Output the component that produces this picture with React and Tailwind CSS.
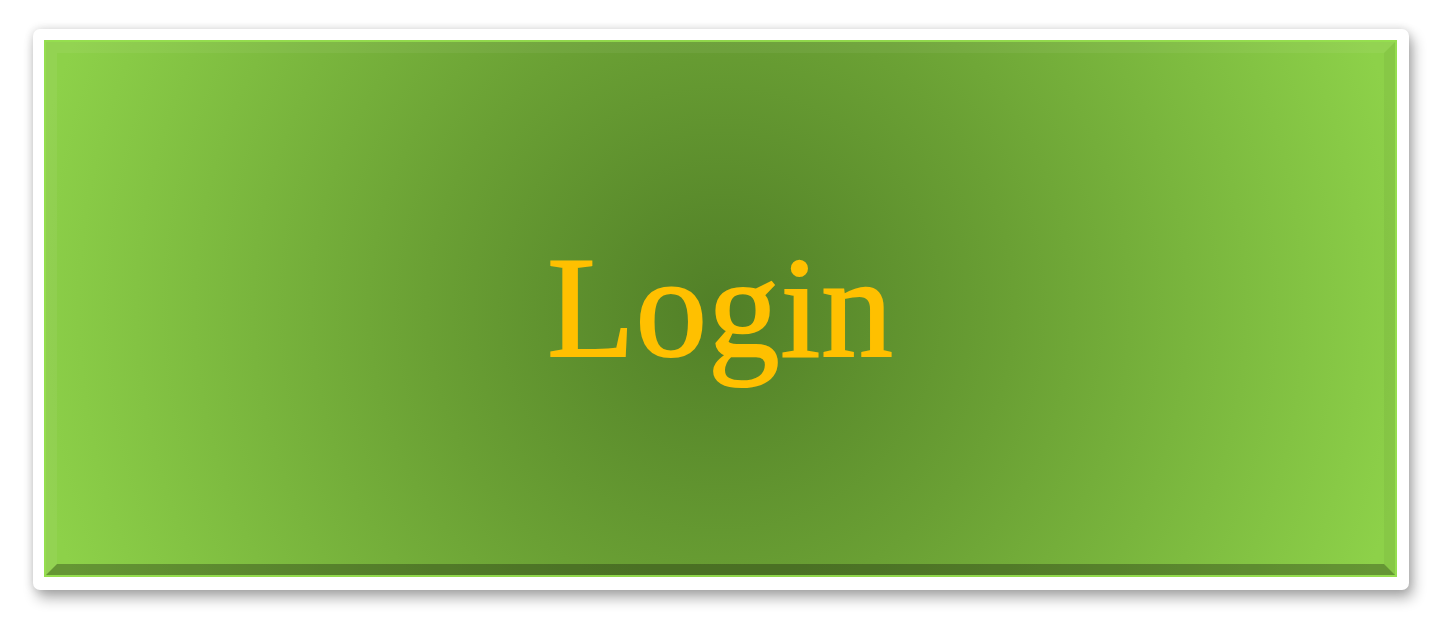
export default function App() {
  return (
    <div className="w-[1442px] h-[628px] bg-white pt-[29px] pl-[33px]">
      <div className="w-[1376px] h-[561px] bg-white rounded-[7px] shadow-[0_0_10px_rgba(0,0,0,0.14),4px_8px_14px_rgba(0,0,0,0.32)] pt-[11px] pl-[11px] pr-[12px] pb-[13px] flex">
        <div className="flex-1 flex p-[2px] bg-[radial-gradient(circle_700px_at_50%_50%,#517f27_0%,#6aa034_42%,#8dd149_100%)] shadow-[inset_0_0_0_2px_rgba(150,225,80,0.85)]">
          <div className="flex-1 flex items-center justify-center border-[11px] border-t-[rgba(255,255,255,0.05)] border-l-[rgba(255,255,255,0.05)] border-r-[rgba(0,0,0,0.04)] border-b-[rgba(0,0,0,0.28)]">
            <span
              className="text-[#ffc000] text-[143px] leading-[143px] tracking-[1px] [-webkit-text-stroke:2px_#ffc000]"
              style={{ fontFamily: '"Liberation Serif", "Times New Roman", serif' }}
            >
              Login
            </span>
          </div>
        </div>
      </div>
    </div>
  );
}
